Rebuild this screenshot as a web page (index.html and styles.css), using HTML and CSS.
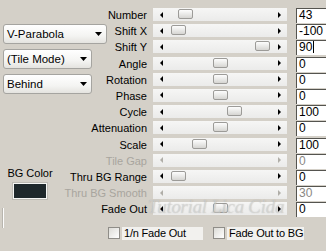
FILE: index.html
```html
<html>
	<head>
		<title>Displacement settings</title>
		<link rel="stylesheet" href="styles.css">
	</head>
	<body>
		<div class="dlg">

			<div class="side">
				<div class="combo wide"><span>V-Parabola</span><svg width="7" height="4" viewBox="0 0 7 4"><polygon points="0,0 7,0 3.5,4" fill="#000"/></svg></div>
				<div class="combo"><span>(Tile Mode)</span><svg width="7" height="4" viewBox="0 0 7 4"><polygon points="0,0 7,0 3.5,4" fill="#000"/></svg></div>
				<div class="combo"><span>Behind</span><svg width="7" height="4" viewBox="0 0 7 4"><polygon points="0,0 7,0 3.5,4" fill="#000"/></svg></div>
				<div class="bgcolor">
					<span>BG Color</span>
					<div class="swatch"></div>
				</div>
				<span class="edge"></span>
			</div>

			<div class="rows">
				<div class="lbl"><span>Number</span></div>
				<div class="track"><i class="al"></i><b class="thumb" style="left:25px"></b><i class="ar"></i></div>
				<div class="val">43</div>

				<div class="lbl"><span>Shift X</span></div>
				<div class="track"><i class="al"></i><b class="thumb" style="left:18px"></b><i class="ar"></i></div>
				<div class="val">-100</div>

				<div class="lbl"><span>Shift Y</span></div>
				<div class="track"><i class="al"></i><b class="thumb" style="left:102px"></b><i class="ar"></i></div>
				<div class="val">90<span class="caret"></span></div>

				<div class="lbl"><span>Angle</span></div>
				<div class="track"><i class="al"></i><b class="thumb" style="left:60px"></b><i class="ar"></i></div>
				<div class="val">0</div>

				<div class="lbl"><span>Rotation</span></div>
				<div class="track"><i class="al"></i><b class="thumb" style="left:60px"></b><i class="ar"></i></div>
				<div class="val">0</div>

				<div class="lbl"><span>Phase</span></div>
				<div class="track"><i class="al"></i><b class="thumb" style="left:60px"></b><i class="ar"></i></div>
				<div class="val">0</div>

				<div class="lbl"><span>Cycle</span></div>
				<div class="track"><i class="al"></i><b class="thumb" style="left:74px"></b><i class="ar"></i></div>
				<div class="val">100</div>

				<div class="lbl"><span>Attenuation</span></div>
				<div class="track"><i class="al"></i><b class="thumb" style="left:60px"></b><i class="ar"></i></div>
				<div class="val">0</div>

				<div class="lbl"><span>Scale</span></div>
				<div class="track"><i class="al"></i><b class="thumb" style="left:39px"></b><i class="ar"></i></div>
				<div class="val">100</div>

				<div class="lbl off"><span>Tile Gap</span></div>
				<div class="track off"><i class="al"></i><i class="ar"></i></div>
				<div class="val off">0</div>

				<div class="lbl"><span>Thru BG Range</span></div>
				<div class="track"><i class="al"></i><b class="thumb" style="left:18px"></b><i class="ar"></i></div>
				<div class="val">0</div>

				<div class="lbl off"><span>Thru BG Smooth</span></div>
				<div class="track off"><i class="al"></i><i class="ar"></i></div>
				<div class="val off">30</div>

				<div class="lbl"><span>Fade Out</span></div>
				<div class="track"><i class="al"></i><b class="thumb" style="left:60px"></b><i class="ar"></i></div>
				<div class="val">0</div>
			</div>

			<div class="checks">
				<span class="box"></span><span class="ctext one">1/n Fade Out</span>
				<span class="box two"></span><span class="ctext">Fade Out to BG</span>
			</div>

			<div class="mark">Tutorial Lica Cida</div>
		</div>
	</body>
</html>
```

FILE: styles.css
```css
body{
	margin: 0;
	background: #d4d0c8;
	font-family: "Liberation Sans", Arial, sans-serif;
	font-size: 11px;
	color: #000;
}

.dlg{
	position: relative;
	box-sizing: border-box;
	width: 326px;
	height: 251px;
	padding-top: 7px;
	overflow: hidden;
	display: grid;
	grid-template-columns: 108px 218px;
	grid-template-rows: auto auto;
	align-content: start;
	align-items: start;
}

/* left column */
.side{
	grid-column: 1;
	grid-row: 1 / 3;
	padding-left: 3px;
	padding-top: 17px;
	display: flex;
	flex-direction: column;
	align-items: flex-start;
}

.combo{
	box-sizing: border-box;
	width: 89px;
	height: 20px;
	margin-bottom: 5px;
	padding: 0 4px 0 3px;
	border: 1px solid #a5a4a0;
	border-radius: 3px;
	background: linear-gradient(#ffffff, #f4f4f2 60%, #e4e3df);
	display: flex;
	align-items: center;
	justify-content: space-between;
	font-size: 11.5px;
}

.combo.wide{
	width: 104px;
}

.bgcolor{
	width: 54px;
	margin-top: 68px;
	display: flex;
	flex-direction: column;
	align-items: center;
	line-height: 13px;
}

.swatch{
	box-sizing: border-box;
	width: 34px;
	height: 16px;
	margin-top: 3px;
	background: #1f282b;
	border: 1px solid #f6f6f4;
	box-shadow: 0 0 0 1px #bdbab3;
}

.edge{
	width: 1px;
	height: 20px;
	margin-top: 9px;
	background: #fdfdfd;
	box-shadow: -1px 0 0 #b8b5ae;
}

/* slider rows */
.rows{
	grid-column: 2;
	grid-row: 1;
	display: grid;
	grid-template-columns: 42px 137px 39px;
	grid-auto-rows: 16.2px;
}

.lbl{
	display: flex;
	justify-content: flex-end;
	padding-right: 3px;
	line-height: 16px;
	white-space: nowrap;
}

.lbl span{
	flex-shrink: 0;
}

.lbl.off{
	color: #a8a59e;
}

.track{
	position: relative;
	height: 13px;
	margin: 1px 0 0 3px;
	padding: 0 6px 0 7px;
	background: linear-gradient(#f6f6f5, #ebebea);
	display: flex;
	align-items: center;
	justify-content: space-between;
}

.al{
	width: 0;
	height: 0;
	border-top: 3px solid transparent;
	border-bottom: 3px solid transparent;
	border-right: 3px solid #000;
}

.ar{
	width: 0;
	height: 0;
	border-top: 3px solid transparent;
	border-bottom: 3px solid transparent;
	border-left: 3px solid #000;
}

.track.off .al{
	border-right-color: #b0aea8;
}

.track.off .ar{
	border-left-color: #b0aea8;
}

.thumb{
	position: absolute;
	top: 1px;
	box-sizing: border-box;
	width: 15px;
	height: 10px;
	border: 1px solid #9c9b98;
	border-radius: 2px;
	background: linear-gradient(#fdfdfd, #e6e6e4 60%, #d6d5d2);
}

.val{
	box-sizing: border-box;
	height: 15px;
	margin: 1px 0 0 9px;
	padding-left: 2px;
	border-left: 1px solid #55544f;
	border-top: 1px solid #55544f;
	background: #fff;
	font-size: 12px;
	line-height: 13px;
}

.val.off{
	color: #8a8883;
}

.caret{
	display: inline-block;
	width: 1px;
	height: 12px;
	margin-left: 1px;
	vertical-align: -2px;
	background: #000;
}

/* bottom check boxes */
.checks{
	grid-column: 2;
	grid-row: 2;
	margin-top: 9px;
	display: flex;
	align-items: center;
	height: 14px;
}

.box{
	box-sizing: border-box;
	flex-shrink: 0;
	width: 12px;
	height: 12px;
	border: 1px solid #8f8d88;
	background: linear-gradient(135deg, #dcdbd6, #ffffff);
}

.box.two{
	margin-left: 10px;
}

.ctext{
	box-sizing: border-box;
	min-width: 75px;
	height: 13px;
	margin-left: 2px;
	padding: 0 1px 0 2px;
	background: #f2f1ee;
	line-height: 13px;
	letter-spacing: -0.2px;
	white-space: nowrap;
}

.ctext.one{
	width: 81px;
}

/* watermark over the sliders */
.mark{
	position: absolute;
	left: 148px;
	top: 196px;
	font-family: "Liberation Serif", serif;
	font-style: italic;
	font-size: 19px;
	letter-spacing: -0.3px;
	color: rgba(236, 236, 233, 0.45);
	text-shadow: 0 0 1px rgba(120, 120, 120, 0.45);
	pointer-events: none;
}
```
